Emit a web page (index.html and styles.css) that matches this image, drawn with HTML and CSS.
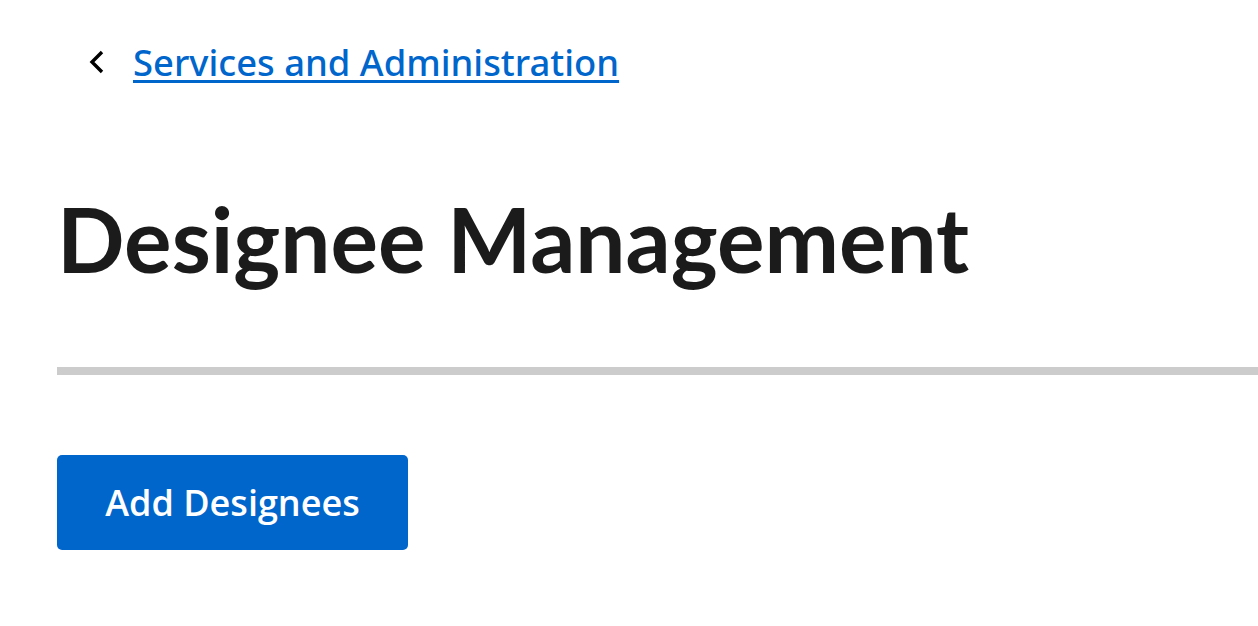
FILE: index.html
```html
<!DOCTYPE html>
<html lang="en">
<head>
<meta charset="utf-8">
<link rel="stylesheet" href="styles.css">
</head>
<body>
<main class="page">
  <nav class="breadcrumb">
    <svg class="chev" width="17" height="24" viewBox="0 0 17 24" aria-hidden="true"><path d="M14 2 L4 12 L14 22" fill="none" stroke="#000" stroke-width="3.4"/></svg>
    <a class="back-link" href="#">Services and Administration</a>
  </nav>
  <h1 class="title">Designee Management</h1>
  <hr class="divider">
  <button class="primary-btn" type="button">Add Designees</button>
</main>
</body>
</html>
```
FILE: styles.css
```css
html, body {
  margin: 0;
  padding: 0;
  background: #fff;
}
.page {
  padding-left: 57px;
  padding-top: 36px;
  font-family: "Open Sans", "Noto Sans", sans-serif;
}
.breadcrumb {
  display: flex;
  align-items: center;
  gap: 28px;
  padding-left: 31px;
  height: 52px;
}
.chev {
  display: block;
}
.back-link {
  color: #0066cc;
  font-family: "Noto Sans", "Open Sans", sans-serif;
  font-size: 36.4px;
  font-weight: 500;
  text-decoration: underline;
  text-underline-offset: 4px;
  text-decoration-thickness: 3px;
}
.title {
  margin: 106px 0 0 0;
  font-family: "Lato", "Open Sans", sans-serif;
  font-weight: 700;
  font-size: 89px;
  line-height: 1;
  color: #1b1b1b;
}
.divider {
  margin: 84px 0 0 0;
  border: 0;
  height: 8px;
  background: #cccccc;
}
.primary-btn {
  margin-top: 80px;
  width: 351px;
  height: 95px;
  background: #0066cc;
  color: #fff;
  border: 0;
  border-radius: 5px;
  font-family: "Open Sans", sans-serif;
  font-weight: 600;
  font-size: 36px;
  padding: 0;
}
```
